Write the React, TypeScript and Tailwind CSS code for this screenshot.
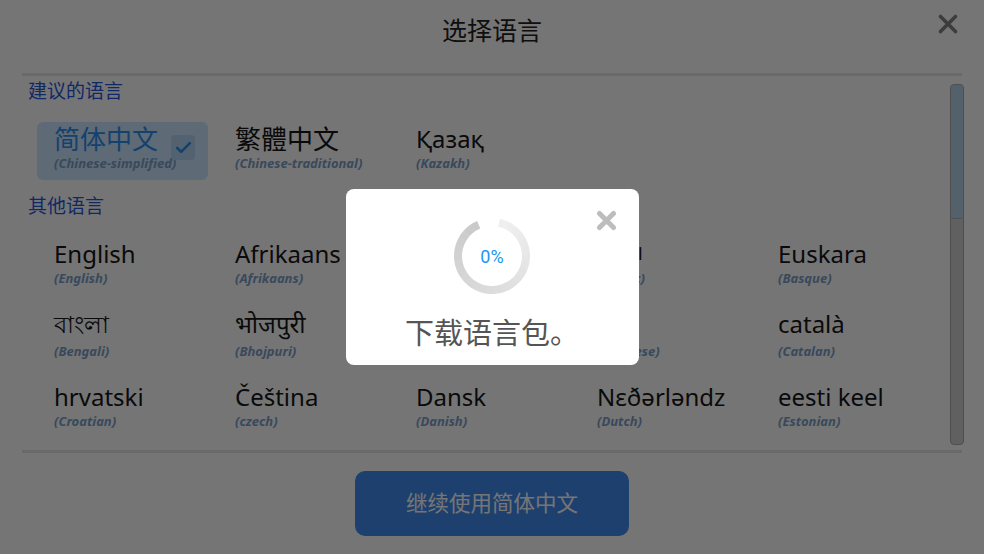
import clsx from "clsx";

type Lang = {
  name: string;
  en: string;
  selected?: boolean;
  tall?: boolean;
  cjk?: boolean;
  small?: boolean;
};

const suggested: Lang[] = [
  { name: "简体中文", en: "Chinese-simplified", selected: true, cjk: true },
  { name: "繁體中文", en: "Chinese-traditional", cjk: true },
  { name: "Қазақ", en: "Kazakh" },
];

const others: Lang[] = [
  { name: "English", en: "English" },
  { name: "Afrikaans", en: "Afrikaans" },
  { name: "Shqip", en: "Albanian" },
  { name: "العربية", en: "Arabic", small: true },
  { name: "Euskara", en: "Basque" },
  { name: "বাংলা", en: "Bengali", tall: true },
  { name: "भोजपुरी", en: "Bhojpuri", tall: true },
  { name: "Български", en: "Bulgarian", tall: true },
  { name: "ဗမာ", en: "Burmese", tall: true },
  { name: "català", en: "Catalan", tall: true },
  { name: "hrvatski", en: "Croatian" },
  { name: "Čeština", en: "czech" },
  { name: "Dansk", en: "Danish" },
  { name: "Nɛðərləndz", en: "Dutch" },
  { name: "eesti keel", en: "Estonian" },
];

function LangCell({ lang }: { lang: Lang }) {
  return (
    <div
      className={clsx(
        "flex items-center justify-between rounded-[6px] pb-[9px] pl-[17px] pt-[2px]",
        lang.selected && "bg-[#cee8fe] pr-[13px]"
      )}
    >
      <div className="min-w-0">
        <div
          className={clsx(
            "whitespace-nowrap leading-[30px]",
            lang.cjk ? "text-[26px]" : lang.small ? "text-[17px]" : "text-[24px]",
            lang.selected ? "text-[#2f8ff0]" : "text-[#161616]"
          )}
        >
          {lang.name}
        </div>
        <div
          className={clsx(
            "whitespace-nowrap text-[13px] font-bold italic leading-[16px] text-[#7d9fc9]",
            lang.tall ? "mt-[4px]" : "mt-[1px]"
          )}
        >
          ({lang.en})
        </div>
      </div>
      {lang.selected && (
        <div className="flex h-[25px] w-[25px] items-center justify-center rounded-[4px] bg-[#b6d6f7]">
          <svg width="19" height="19" viewBox="0 0 24 24" fill="none">
            <path d="M4 12.5l5 5L20 6.5" stroke="#2a8fe6" strokeWidth="3.2" strokeLinecap="round" strokeLinejoin="round" />
          </svg>
        </div>
      )}
    </div>
  );
}

function Ring() {
  const cx = 38;
  const r = 34;
  const start = 12;
  const sweep = 325;
  const steps = 26;
  const pt = (deg: number) => {
    const a = (deg * Math.PI) / 180;
    return `${(cx + r * Math.sin(a)).toFixed(2)} ${(cx - r * Math.cos(a)).toFixed(2)}`;
  };
  const segs = Array.from({ length: steps }, (_, i) => {
    const a0 = start + (sweep * i) / steps;
    const a1 = start + (sweep * (i + 1)) / steps + (i < steps - 1 ? 0.6 : 0);
    const g = Math.round(239 - (37 * i) / (steps - 1));
    return { d: `M ${pt(a0)} A ${r} ${r} 0 0 1 ${pt(a1)}`, color: `rgb(${g},${g},${g})` };
  });
  return (
    <svg width="76" height="76" viewBox="0 0 76 76" className="col-start-1 row-start-1">
      {segs.map((s, i) => (
        <path key={i} d={s.d} stroke={s.color} strokeWidth="8" fill="none" />
      ))}
    </svg>
  );
}

export default function App() {
  return (
    <div className="relative h-[554px] w-full overflow-hidden bg-white font-['Noto_Sans','Noto_Sans_CJK_SC',sans-serif]">
      <header className="grid h-[73px] grid-cols-[1fr_auto_1fr] items-start pt-[13px]">
        <div />
        <h1 className="text-[25px] leading-[34px] text-[#222]">选择语言</h1>
        <button className="mr-[26px] mt-[1px] justify-self-end">
          <svg width="20" height="20" viewBox="0 0 20 20">
            <path d="M2.5 2.5l15 15M17.5 2.5l-15 15" stroke="#838383" strokeWidth="3.6" strokeLinecap="round" />
          </svg>
        </button>
      </header>
      <div className="mx-[22px] h-[3px] bg-[#e6e6e6]" />

      <div className="flex h-[374px]">
        <div className="flex-1 overflow-hidden pt-[4px]">
          <h2 className="pl-[28px] text-[19px] leading-[22px] text-[#2757e0]">建议的语言</h2>
          <div className="ml-[37px] mt-[20px] grid grid-cols-[repeat(5,171px)] gap-x-[10px]">
            {suggested.map((l) => (
              <LangCell key={l.en} lang={l} />
            ))}
          </div>
          <h2 className="mt-[15px] pl-[28px] text-[19px] leading-[22px] text-[#2757e0]">其他语言</h2>
          <div className="ml-[37px] mt-[20px] grid grid-cols-[repeat(5,171px)] gap-x-[10px] gap-y-[12px]">
            {others.map((l) => (
              <LangCell key={l.en} lang={l} />
            ))}
          </div>
        </div>
        <div className="mb-[5px] mr-[20px] mt-[8px] flex w-[14px] flex-col overflow-hidden rounded-[4px] border border-[#ababab] bg-[#d2d2d2]">
          <div className="h-[134px] rounded-[3px] border-b border-[#9fb3c4] bg-[#b6d3ea]" />
        </div>
      </div>

      <div className="mx-[22px] h-[3px] bg-[#e6e6e6]" />
      <footer className="flex justify-center pt-[18px]">
        <button className="h-[65px] w-[274px] rounded-[10px] bg-[#438def] text-[21.5px] text-white">
          继续使用简体中文
        </button>
      </footer>

      <div className="absolute inset-0 flex items-center justify-center bg-black/[0.54]">
        <div className="relative flex h-[176px] w-[293px] flex-col items-center rounded-[8px] bg-white pt-[29px]">
          <button className="absolute right-[22px] top-[21px]">
            <svg width="21" height="21" viewBox="0 0 21 21">
              <path d="M3.5 3.5l14 14M17.5 3.5l-14 14" stroke="#bdbdbd" strokeWidth="5" strokeLinecap="round" />
            </svg>
          </button>
          <div className="grid place-items-center">
            <Ring />
            <span className="col-start-1 row-start-1 font-['Roboto',sans-serif] text-[18px] text-[#2196f3]">0%</span>
          </div>
          <p className="mt-[21px] text-[29px] leading-[36px] text-[#555]">下载语言包。</p>
        </div>
      </div>
    </div>
  );
}
